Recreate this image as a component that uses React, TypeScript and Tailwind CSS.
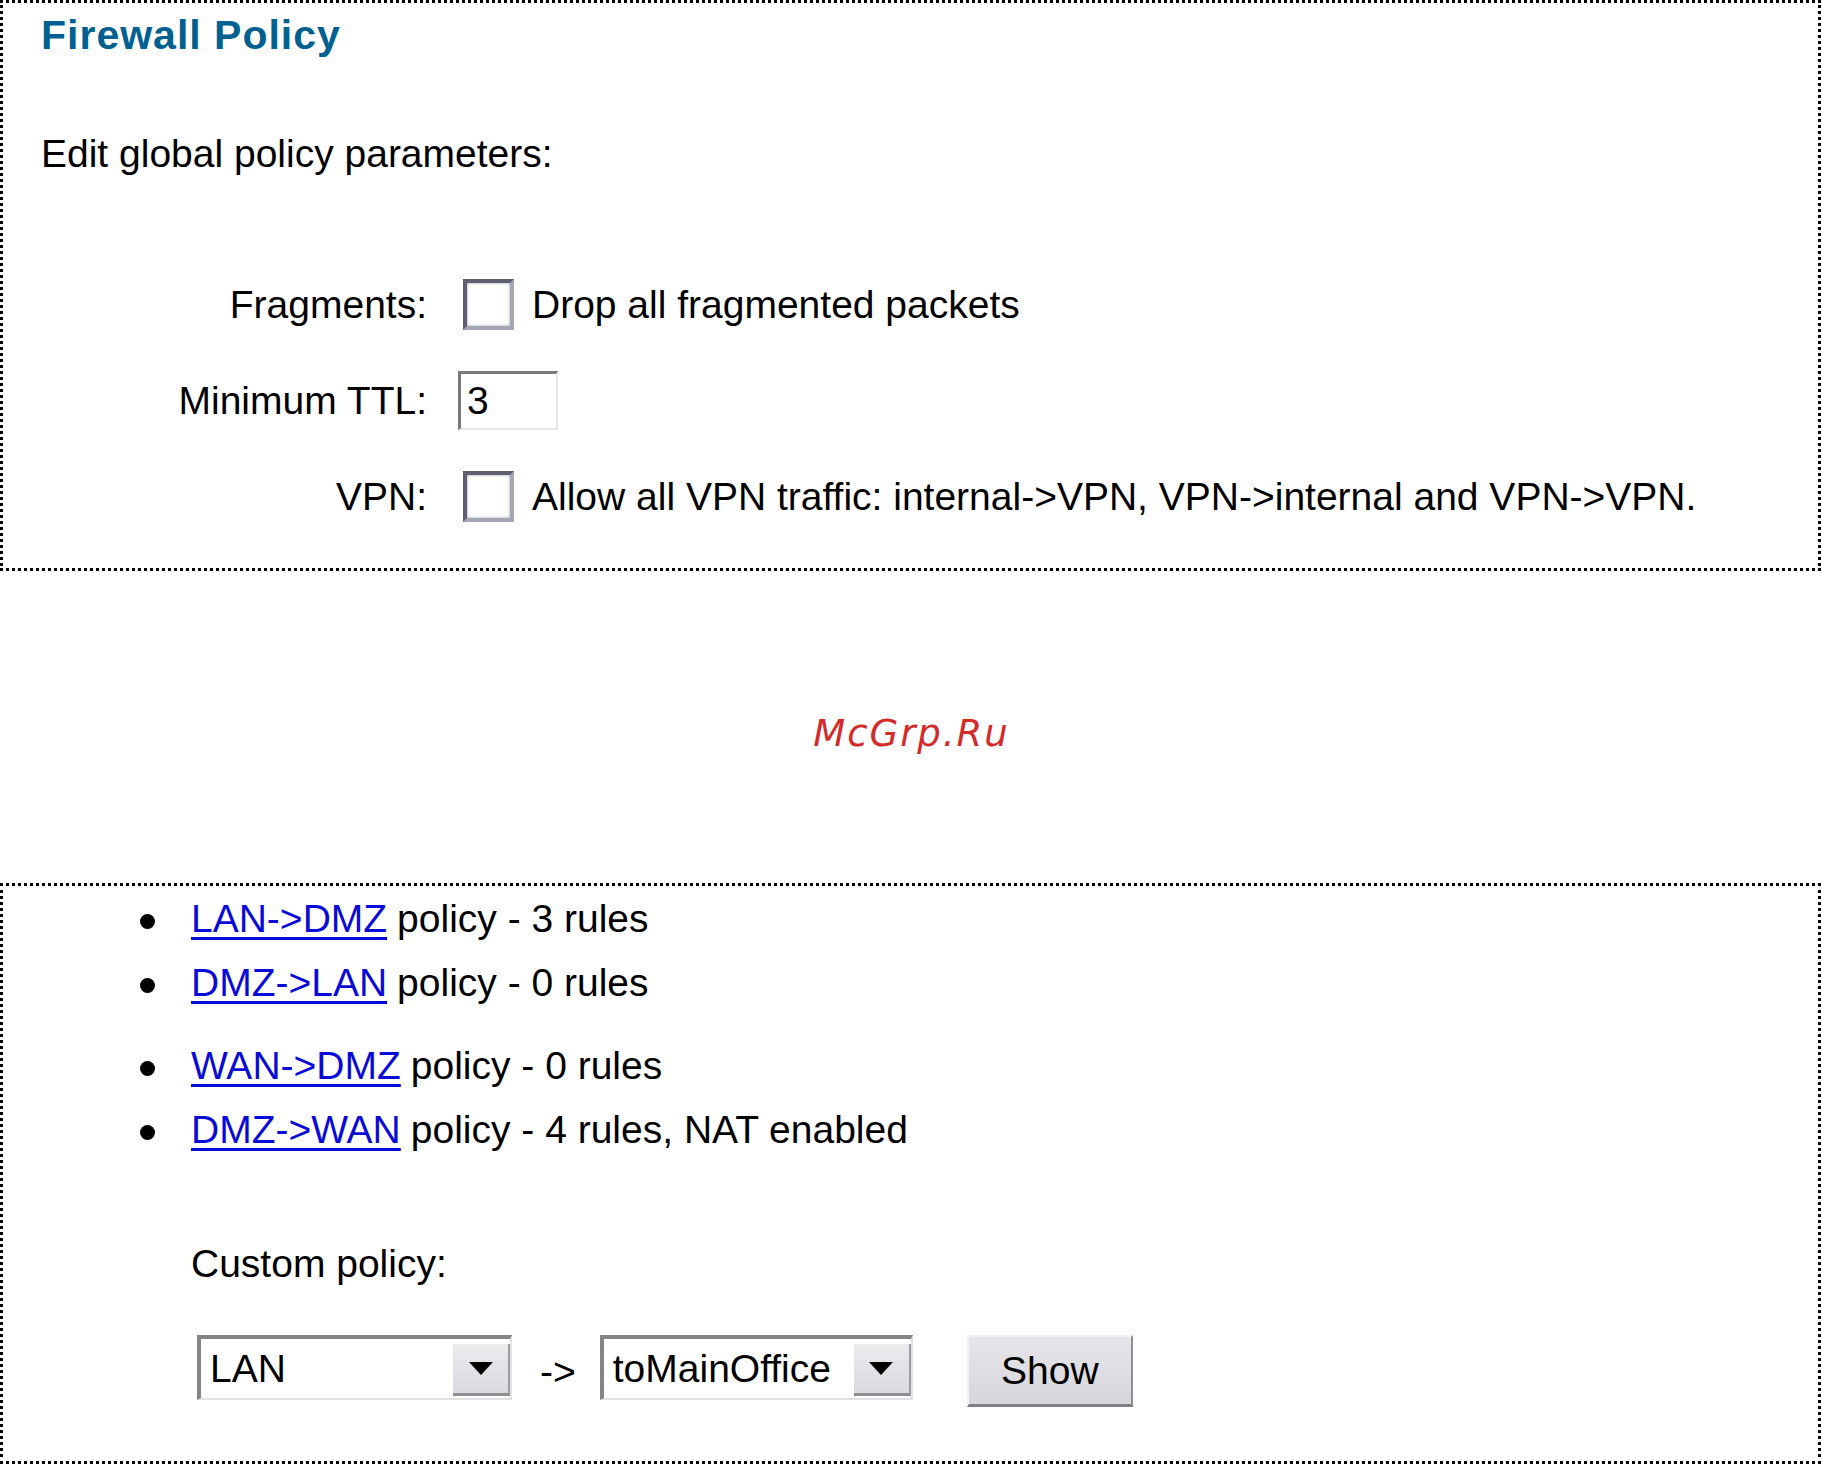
import React from "react";

const policyGroups = [
  [
    { name: "LAN->DMZ", info: "policy - 3 rules" },
    { name: "DMZ->LAN", info: "policy - 0 rules" },
  ],
  [
    { name: "WAN->DMZ", info: "policy - 0 rules" },
    { name: "DMZ->WAN", info: "policy - 4 rules, NAT enabled" },
  ],
];

function Checkbox() {
  return (
    <span className="ml-[5px] inline-block h-[51px] w-[51px] shrink-0 border-[4px] border-t-[#5c6070] border-l-[#5c6070] border-r-[#a3a6b3] border-b-[#a3a6b3] bg-white shadow-[inset_0_0_3px_rgba(70,72,90,0.55)]" />
  );
}

function TextInput({ value }: { value: string }) {
  return (
    <div className="flex h-[59px] w-[100px] items-center border-t-[3px] border-l-[3px] border-r-[2px] border-b-[2px] border-t-[#7a7a7a] border-l-[#7a7a7a] border-r-[#e6e6e6] border-b-[#e6e6e6] bg-white pl-[6px] leading-none">
      {value}
    </div>
  );
}

function Select({ value, width }: { value: string; width: string }) {
  return (
    <div
      className={`flex h-[65px] ${width} shrink-0 items-center border-t-[4px] border-l-[4px] border-r-[2px] border-b-[2px] border-t-[#858585] border-l-[#858585] border-r-[#e2e2e2] border-b-[#e2e2e2] bg-white pl-[9px] leading-none`}
    >
      <span>{value}</span>
      <span className="mt-[5px] ml-auto flex h-[52px] w-[57px] items-center justify-center self-start border-r-[2px] border-b-[3px] border-r-[#9c9ca2] border-b-[#8e8e94] bg-gradient-to-b from-[#ececef] to-[#d9d9de]">
        <svg width="24" height="13" viewBox="0 0 24 13">
          <polygon points="0,0 24,0 12,13" fill="#000" />
        </svg>
      </span>
    </div>
  );
}

export default function App() {
  return (
    <div className="min-h-[1465px] w-[1823px] bg-white font-['Liberation_Sans',Arial,sans-serif] text-[39px] text-black">
      {/* Global policy */}
      <div className="mr-[2px] border-[3px] border-dotted border-black pt-[12px] pb-[24px] pl-[38px]">
        <h1 className="text-[41px] leading-none font-bold tracking-[1px] text-[#00608f]">
          Firewall Policy
        </h1>
        <p className="mt-[78px] leading-none">Edit global policy parameters:</p>

        <div className="mt-[83px] -ml-[38px]">
          <div className="flex h-[96px] items-center">
            <span className="w-[424px] shrink-0 text-right leading-none">Fragments:</span>
            <div className="ml-[31px] flex items-center">
              <Checkbox />
              <span className="ml-[18px] leading-none">Drop all fragmented packets</span>
            </div>
          </div>
          <div className="flex h-[96px] items-center">
            <span className="w-[424px] shrink-0 text-right leading-none">Minimum TTL:</span>
            <div className="ml-[31px]">
              <TextInput value="3" />
            </div>
          </div>
          <div className="flex h-[96px] items-center">
            <span className="w-[424px] shrink-0 text-right leading-none">VPN:</span>
            <div className="ml-[31px] flex items-center">
              <Checkbox />
              <span className="ml-[18px] leading-none">
                Allow all VPN traffic: internal-&gt;VPN, VPN-&gt;internal and VPN-&gt;VPN.
              </span>
            </div>
          </div>
        </div>
      </div>

      <div className="flex h-[312px] items-center justify-center pt-[12px]">
        <span className="font-['DejaVu_Sans',sans-serif] text-[37px] leading-none tracking-[2px] text-[#d42a2a] italic">
          McGrp.Ru
        </span>
      </div>

      {/* Zone policies */}
      <div className="mr-[2px] border-[3px] border-dotted border-black pb-[54px] pl-[134px]">
        {policyGroups.map((group, gi) => (
          <div key={gi} className={gi > 0 ? "mt-[19px]" : ""}>
            {group.map((p) => (
              <div key={p.name} className="flex h-[64px] items-center leading-none">
                <span className="w-[54px] shrink-0">
                  <span className="mt-[6px] ml-[3px] block h-[15px] w-[15px] rounded-full bg-black" />
                </span>
                <a
                  href="#"
                  className="text-[#0a0ad8] underline decoration-[3px] underline-offset-[5px]"
                >
                  {p.name}
                </a>
                <span className="ml-[10px]">{p.info}</span>
              </div>
            ))}
          </div>
        ))}

        <div className="pl-[54px]">
          <p className="mt-[83px] leading-none">Custom policy:</p>
          <div className="mt-[52px] ml-[6px] flex items-start">
            <Select value="LAN" width="w-[315px]" />
            <span className="ml-[28px] self-center leading-none">-&gt;</span>
            <div className="ml-[24px]">
              <Select value="toMainOffice" width="w-[313px]" />
            </div>
            <button className="ml-[54px] h-[72px] w-[166px] border-t-[2px] border-l-[2px] border-r-[2px] border-b-[3px] border-t-[#f2f2f4] border-l-[#f2f2f4] border-r-[#8e8e94] border-b-[#7e7e84] bg-gradient-to-b from-[#e6e6ea] to-[#d6d6db] leading-none">
              Show
            </button>
          </div>
        </div>
      </div>
    </div>
  );
}
